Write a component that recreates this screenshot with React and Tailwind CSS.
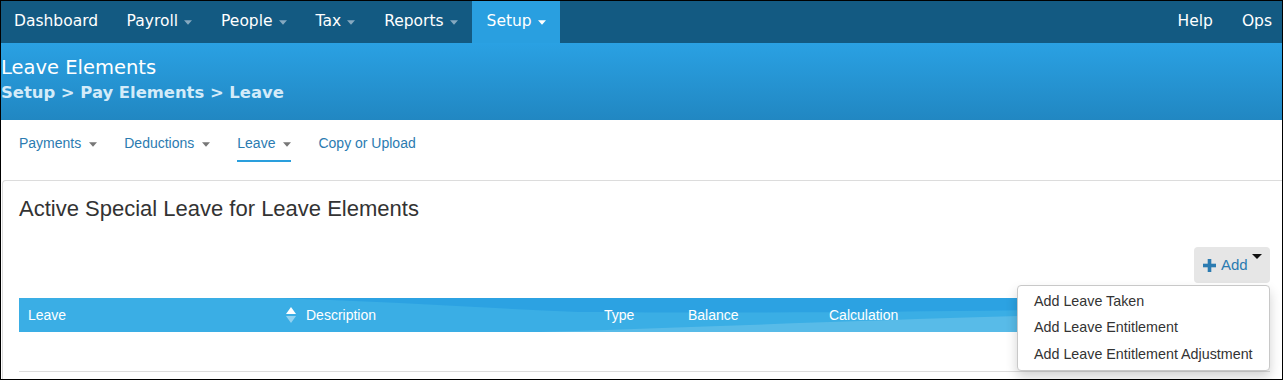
import React from "react";

const Caret = ({ className = "", w = 9 }) => (
  <svg width={w} height="5" viewBox="0 0 9 5" className={className}>
    <path d="M0 0 L9 0 L4.5 5 Z" fill="currentColor" />
  </svg>
);

const topNav = [
  { label: "Dashboard" },
  { label: "Payroll", caret: true },
  { label: "People", caret: true },
  { label: "Tax", caret: true },
  { label: "Reports", caret: true },
  { label: "Setup", caret: true, active: true },
];

const subNav = [
  { label: "Payments", caret: true },
  { label: "Deductions", caret: true },
  { label: "Leave", caret: true, active: true },
  { label: "Copy or Upload" },
];

const columns = [
  { label: "Leave", w: "w-[258px]" },
  { label: "", w: "w-[20px]", sort: true },
  { label: "Description", w: "w-[298px]" },
  { label: "Type", w: "w-[84px]" },
  { label: "Balance", w: "w-[141px]" },
  { label: "Calculation", w: "flex-1" },
];

const menuItems = [
  "Add Leave Taken",
  "Add Leave Entitlement",
  "Add Leave Entitlement Adjustment",
];

const App = () => {
  return (
    <div className="w-[1283px] h-[380px] border border-black overflow-hidden bg-white font-['Liberation_Sans',Arial,sans-serif]">
      {/* top nav */}
      <div className="h-[42px] bg-[#135a82] flex items-stretch justify-between font-['DejaVu_Sans',sans-serif] text-white text-[15.5px]">
        <div className="flex items-stretch">
          {topNav.map((n, i) => (
            <div
              key={n.label}
              className={`flex items-center ${i === 0 ? "pl-[13px] pr-[14px]" : "px-[14.5px]"} ${
                n.active ? "bg-[#299fe0]" : ""
              }`}
            >
              <span>{n.label}</span>
              {n.caret && (
                <Caret w={8} className={`ml-[6px] ${n.active ? "text-white" : "text-[#86a9c0]"}`} />
              )}
            </div>
          ))}
        </div>
        <div className="flex items-center gap-[29px] pr-[10px]">
          <span>Help</span>
          <span>Ops</span>
        </div>
      </div>

      {/* page header */}
      <div className="h-[77px] bg-gradient-to-b from-[#2aa1e3] to-[#2187c2] pt-[11px]">
        <div className="font-['DejaVu_Sans',sans-serif] text-white text-[19.5px] leading-[27px]">
          Leave Elements
        </div>
        <div className="font-['DejaVu_Sans',sans-serif] font-bold text-[#d3ebf9] text-[16.4px] leading-[24px]">
          Setup &gt; Pay Elements &gt; Leave
        </div>
      </div>

      {/* sub nav */}
      <div className="h-[60px] flex items-start gap-[27px] pl-[18px] pt-[11px] text-[14px] text-[#2b7bb1]">
        {subNav.map((s) => (
          <div
            key={s.label}
            className={`flex items-center h-[31px] pb-[4px] border-b-2 ${
              s.active ? "border-[#2a9fdd]" : "border-transparent"
            }`}
          >
            <span>{s.label}</span>
            {s.caret && <Caret w={8} className="ml-[8px] mt-[2px] text-[#777]" />}
          </div>
        ))}
      </div>

      {/* panel */}
      <div className="relative border-t border-l border-[#dcdcdc] rounded-tl-[4px] ml-[1px] pl-[16px] pr-[12px] h-[200px]">
        <div className="pt-[16px] text-[22px] leading-[24px] text-[#333]">
          Active Special Leave for Leave Elements
        </div>

        <div className="flex justify-end mt-[26px]">
          <div className="relative w-[76px] h-[36px] rounded-[4px] bg-[#e6e6e6] flex items-center pl-[9px] text-[15px] text-[#2b7bb1]">
            <svg width="13" height="13" viewBox="0 0 13 13" className="mr-[5px]">
              <rect x="4.7" y="0" width="3.6" height="13" fill="#2b7bb1" />
              <rect x="0" y="4.7" width="13" height="3.6" fill="#2b7bb1" />
            </svg>
            <span>Add</span>
            <svg width="10" height="5" viewBox="0 0 10 5" className="absolute right-[8px] top-[7px]">
              <path d="M0 0 L10 0 L5 5 Z" fill="#111" />
            </svg>
          </div>
        </div>

        {/* table */}
        <div className="mt-[15px]">
          <div className="relative h-[34px] bg-[#3aaee5] overflow-hidden">
            <svg
              className="absolute inset-0"
              width="100%"
              height="100%"
              viewBox="0 0 1251 34"
              preserveAspectRatio="none"
            >
              <path d="M260 0 L1251 0 L1251 9 C1000 12 820 16 560 14 C460 10 360 3 260 0 Z" fill="#2ca2e2" />
              <path d="M520 34 C720 28 940 18 1251 12 L1251 34 Z" fill="#58bbe8" />
            </svg>
            <div className="relative flex items-center h-full pl-[9px] text-[14px] text-white">
              {columns.map((c, i) => (
                <div key={i} className={`${c.w} flex items-center`}>
                  {c.sort ? (
                    <svg width="10" height="16" viewBox="0 0 10 16">
                      <path d="M5 0 L10 7 L0 7 Z" fill="#ffffff" />
                      <path d="M0 9 L10 9 L5 16 Z" fill="#ffffff" fillOpacity="0.45" />
                    </svg>
                  ) : (
                    c.label
                  )}
                </div>
              ))}
            </div>
          </div>
          <div className="h-[40px] border-b border-[#dddddd]" />
        </div>

        {/* dropdown menu */}
        <div className="absolute right-[12px] top-[104px] w-[253px] bg-white border border-[#c8c8c8] rounded-[4px] shadow-[0_6px_12px_rgba(0,0,0,0.18)] py-[2px] text-[14.3px] text-[#333]">
          {menuItems.map((m) => (
            <div key={m} className="pl-[16px] h-[26.5px] flex items-center">
              {m}
            </div>
          ))}
        </div>
      </div>
    </div>
  );
};

export default App;
